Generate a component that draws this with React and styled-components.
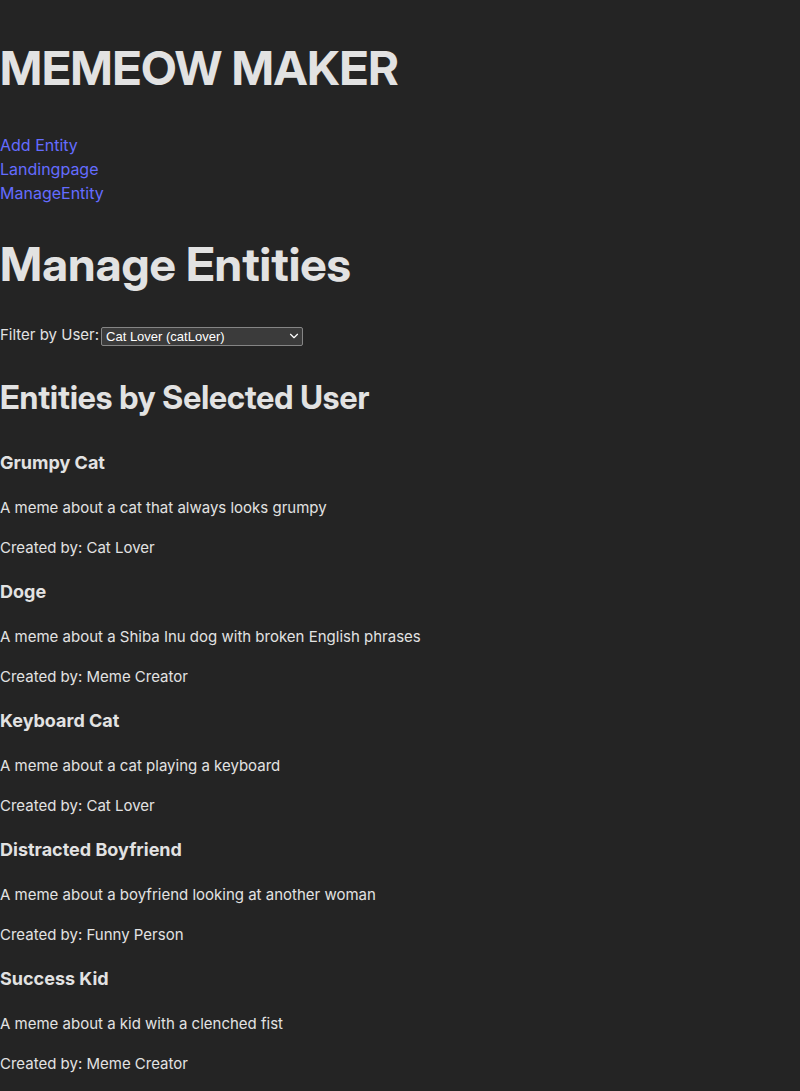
import React, { useState } from "react";
import styled, { createGlobalStyle } from "styled-components";
import { ChevronDown } from "lucide-react";

const GlobalStyle = createGlobalStyle`
  body {
    margin: 0;
    background: #242424;
    color: #e2e2e2;
    font-family: Inter, sans-serif;
    font-size: 15px;
    line-height: 24px;
    color-scheme: dark;
  }
`;

const Header = styled.header`
  padding: 9px 0 6px;
`;

const Title = styled.h1`
  margin: 32px 0;
  font-family: "Inter Display", Inter, sans-serif;
  font-size: 47px;
  line-height: 54px;
  font-weight: 700;
`;

const Nav = styled.nav`
  display: flex;
  flex-direction: column;
  align-items: flex-start;
`;

const NavLink = styled.a`
  color: #646cff;
  font-size: 16px;
  text-decoration: none;
  &:hover {
    color: #535bf2;
  }
`;

const Filter = styled.div`
  display: flex;
  align-items: center;
  gap: 2px;
`;

const SelectBox = styled.div`
  display: grid;
  align-items: center;
  margin-top: 2px;
  color: #ffffff;

  > * {
    grid-area: 1 / 1;
  }

  svg {
    justify-self: end;
    margin-right: 2px;
    pointer-events: none;
  }
`;

const Select = styled.select`
  appearance: none;
  width: 202px;
  height: 19px;
  padding: 0 4px;
  border: 1px solid #858585;
  border-radius: 2px;
  background: #3b3b3b;
  color: #ffffff;
  font-family: "Liberation Sans", Arial, sans-serif;
  font-size: 13px;
`;

const SectionTitle = styled.h2`
  margin: 27px 0;
  font-family: "Inter Display", Inter, sans-serif;
  font-size: 32px;
  line-height: 48px;
  font-weight: 700;
`;

const Entity = styled.article`
  margin-bottom: 18px;
`;

const EntityName = styled.h3`
  margin: 0 0 19px;
  font-size: 18px;
  line-height: 28px;
  font-weight: 700;
`;

const Text = styled.p`
  margin: 16px 0 0;
`;

const links = ["Add Entity", "Landingpage", "ManageEntity"];

const entities = [
  ["Grumpy Cat", "A meme about a cat that always looks grumpy", "Cat Lover"],
  ["Doge", "A meme about a Shiba Inu dog with broken English phrases", "Meme Creator"],
  ["Keyboard Cat", "A meme about a cat playing a keyboard", "Cat Lover"],
  ["Distracted Boyfriend", "A meme about a boyfriend looking at another woman", "Funny Person"],
  ["Success Kid", "A meme about a kid with a clenched fist", "Meme Creator"],
];

export default function App() {
  const [user, setUser] = useState("catLover");
  return (
    <>
      <GlobalStyle />
      <Header>
        <Title>MEMEOW MAKER</Title>
      </Header>
      <Nav>
        {links.map((label) => (
          <NavLink key={label} href="#">{label}</NavLink>
        ))}
      </Nav>
      <main>
        <Title>Manage Entities</Title>
        <Filter>
          <label htmlFor="user">Filter by User:</label>
          <SelectBox>
            <Select id="user" value={user} onChange={(e) => setUser(e.target.value)}>
              <option value="catLover">Cat Lover (catLover)</option>
              <option value="memeCreator">Meme Creator (memeCreator)</option>
              <option value="funnyPerson">Funny Person (funnyPerson)</option>
            </Select>
            <ChevronDown size={14} strokeWidth={2} aria-hidden="true" />
          </SelectBox>
        </Filter>
        <SectionTitle>Entities by Selected User</SectionTitle>
        {entities.map(([name, description, author]) => (
          <Entity key={name}>
            <EntityName>{name}</EntityName>
            <Text>{description}</Text>
            <Text>Created by: {author}</Text>
          </Entity>
        ))}
      </main>
    </>
  );
}
